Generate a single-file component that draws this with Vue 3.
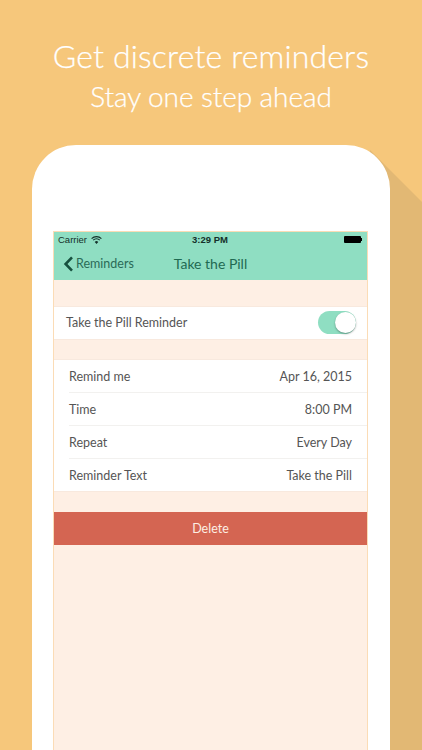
<template>
  <div class="page">
    <svg class="long-shadow" width="422" height="750" viewBox="0 0 422 750">
      <polygon points="370,150 422,202 422,750 370,750" fill="#e2b874" />
    </svg>
    <header class="headline">
      <h1>Get discrete reminders</h1>
      <h2>Stay one step ahead</h2>
    </header>
    <div class="phone">
      <div class="screen">
        <div class="topbar">
          <div class="status">
            <span class="carrier">Carrier
              <svg width="11" height="8" viewBox="0 0 11 8">
                <path d="M0.6 2.6a7 7 0 0 1 9.8 0M2.2 4.2a4.7 4.7 0 0 1 6.6 0" fill="none" stroke="#14302a" stroke-width="1.1" />
                <path d="M5.5 8 3.7 5.9a2.6 2.6 0 0 1 3.6 0z" fill="#14302a" />
              </svg>
            </span>
            <span class="clock">3:29 PM</span>
            <span class="battery"><i></i><b></b></span>
          </div>
          <nav class="nav">
            <span class="back">
              <svg width="11" height="16" viewBox="0 0 11 16">
                <path d="M9 1.4 2.6 8 9 14.6" fill="none" stroke="#17513f" stroke-width="2.6" />
              </svg>
              Reminders
            </span>
            <span class="title">Take the Pill</span>
          </nav>
        </div>
        <div class="group first">
          <div class="toggle-row">
            <span>Take the Pill Reminder</span>
            <span class="switch"><i></i></span>
          </div>
        </div>
        <div class="group second">
          <div v-for="row in rows" :key="row.label" class="row">
            <span>{{ row.label }}</span>
            <span>{{ row.value }}</span>
          </div>
        </div>
        <button class="delete">Delete</button>
      </div>
    </div>
  </div>
</template>

<script setup>
const rows = [
  { label: 'Remind me', value: 'Apr 16, 2015' },
  { label: 'Time', value: '8:00 PM' },
  { label: 'Repeat', value: 'Every Day' },
  { label: 'Reminder Text', value: 'Take the Pill' }
]
</script>

<style>
html, body {
  margin: 0;
  overflow: hidden;
}
</style>

<style scoped>
.page {
  position: relative;
  width: 422px;
  height: 750px;
  overflow: hidden;
  background: #f6c77b;
  font-family: Lato, "Open Sans", sans-serif;
  display: flex;
  flex-direction: column;
}

.long-shadow {
  position: absolute;
  left: 0;
  top: 0;
}

.headline {
  position: relative;
  height: 145px;
  padding-top: 36px;
  box-sizing: border-box;
  text-align: center;
  color: #fff;
  -webkit-text-stroke: 0.25px #fff;
}

.headline h1 {
  margin: 0;
  font-size: 32px;
  line-height: 40px;
  font-weight: 300;
  letter-spacing: 0.15px;
}

.headline h2 {
  margin: 1px 0 0;
  font-size: 28px;
  line-height: 38px;
  font-weight: 300;
  letter-spacing: -0.08px;
}

.phone {
  position: relative;
  flex: 1;
  margin: 0 32px;
  padding: 86px 22px 0 21px;
  background: #fff;
  border-radius: 44px 44px 0 0;
}

.screen {
  height: 100%;
  box-sizing: border-box;
  background: #feefe4;
  border: solid #fbdcb6;
  border-width: 1px 1px 0;
  display: flex;
  flex-direction: column;
}

.topbar {
  height: 48px;
  background: #8fdec2;
  color: #17513f;
}

.status {
  height: 15px;
  padding: 0 5px 0 4px;
  display: flex;
  align-items: center;
  justify-content: space-between;
  font-family: "Liberation Sans", Arial, sans-serif;
  font-size: 9.5px;
  color: #14302a;
}

.carrier {
  width: 112px;
  display: flex;
  align-items: center;
  gap: 4px;
}

.clock {
  font-weight: 700;
}

.battery {
  width: 112px;
  display: flex;
  justify-content: flex-end;
  align-items: center;
}

.battery i {
  display: block;
  width: 17px;
  height: 7px;
  background: #000;
  border-radius: 1px;
}

.battery b {
  display: block;
  width: 1px;
  height: 3px;
  background: #000;
}

.nav {
  position: relative;
  height: 33px;
  display: flex;
  align-items: center;
  justify-content: center;
  font-size: 14px;
}

.back {
  position: absolute;
  left: 9px;
  top: 0;
  height: 33px;
  display: flex;
  align-items: center;
  gap: 2px;
  font-size: 12.5px;
  color: #2a6b57;
}

.title {
  color: #1f6a52;
}

.group {
  background: #fff;
  border: solid #f8e9de;
  border-width: 1px 0;
  color: #555;
  font-size: 12.5px;
}

.first {
  margin-top: 26px;
}

.second {
  margin-top: 19px;
  padding-left: 15px;
}

.toggle-row {
  height: 32px;
  padding: 0 11px 1px 12px;
  box-sizing: border-box;
  display: flex;
  align-items: center;
  justify-content: space-between;
}

.switch {
  width: 38px;
  height: 23px;
  border-radius: 12px;
  background: #8fdec2;
  display: flex;
  justify-content: flex-end;
}

.switch i {
  display: block;
  width: 21px;
  height: 21px;
  margin: 1px 0 0;
  border-radius: 50%;
  background: #fff;
  box-shadow: 0 1px 2px rgba(0, 0, 0, 0.35);
}

.row {
  height: 33px;
  padding-right: 15px;
  box-sizing: border-box;
  display: flex;
  align-items: center;
  justify-content: space-between;
  border-bottom: 1px solid #f2f1ef;
}

.row:last-child {
  height: 32px;
  border-bottom: 0;
}

.delete {
  margin-top: 20px;
  height: 33px;
  padding: 0;
  border: 0;
  background: #d46552;
  color: #fdeee3;
  font-family: inherit;
  font-size: 12.5px;
}
</style>
